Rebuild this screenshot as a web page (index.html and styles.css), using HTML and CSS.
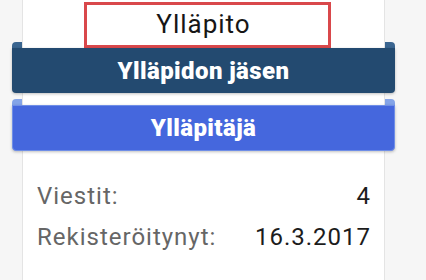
FILE: index.html
```html
<!DOCTYPE html>
<html lang="fi">
<head>
<meta charset="utf-8">
<title>Ylläpito</title>
<link rel="stylesheet" href="styles.css">
</head>
<body>
<div class="card">
  <div class="title"><span class="title-text">Ylläpito</span></div>
  <div class="ribbon ribbon-dark">Ylläpidon jäsen</div>
  <div class="ribbon ribbon-blue">Ylläpitäjä</div>
  <div class="stats">
    <div class="row"><span class="label">Viestit:</span><span class="value">4</span></div>
    <div class="row"><span class="label">Rekisteröitynyt:</span><span class="value">16.3.2017</span></div>
  </div>
</div>
</body>
</html>
```
FILE: styles.css
```css
html, body {
  margin: 0;
  padding: 0;
  background: #f6f6f6;
  font-family: Roboto, "Liberation Sans", sans-serif;
}
.card {
  position: relative;
  z-index: 0;
  margin-left: 22px;
  width: 363px;
  box-sizing: border-box;
  height: 280px;
  background: #fff;
  border-left: 1px solid #e4e4e4;
  border-right: 1px solid #e4e4e4;
  padding-top: 2px;
}
.title {
  position: relative;
  height: 46px;
  display: flex;
  align-items: center;
  justify-content: center;
  font-size: 26px;
  letter-spacing: 1px;
  color: #161616;
}
.title-text { margin-top: -3px; }
.title::after {
  content: "";
  position: absolute;
  left: 61px;
  top: 0;
  width: 247px;
  height: 46px;
  box-sizing: border-box;
  border: 3px solid #d9484b;
}
.ribbon {
  position: relative;
  margin: 0 -11px;
  display: flex;
  align-items: center;
  justify-content: center;
  color: #fff;
  font-weight: 900;
  font-size: 24px;
  letter-spacing: 0.4px;
  border-radius: 0 0 4px 4px;
  box-shadow: 0 1px 3px rgba(0,0,0,0.25);
}
.ribbon::before,
.ribbon::after {
  content: "";
  position: absolute;
  top: -6px;
  width: 10px;
  height: 8px;
  z-index: -1;
}
.ribbon::before { left: 0; border-radius: 4px 0 0 0; }
.ribbon::after { right: 0; border-radius: 0 4px 0 0; }
.ribbon-dark {
  height: 45px;
  background: #234a70;
}
.ribbon-dark::before,
.ribbon-dark::after { background: #3a6590; }
.ribbon-blue {
  margin-top: 12px;
  height: 46px;
  box-sizing: border-box;
  background: #4567dd;
  border: 1px solid #6f8ee7;
}
.ribbon-blue::before,
.ribbon-blue::after { background: #84a4e8; top: -7px; }
.ribbon-blue::before { left: -1px; }
.ribbon-blue::after { right: -1px; }
.stats {
  padding: 31px 14px 0 14px;
  display: flex;
  flex-direction: column;
  gap: 13px;
  font-size: 24px;
  letter-spacing: 1px;
}
.row {
  display: flex;
  justify-content: space-between;
  line-height: 28px;
}
.label { color: #666; }
.value { color: #1c1c1c; margin-right: -1px; }
```
